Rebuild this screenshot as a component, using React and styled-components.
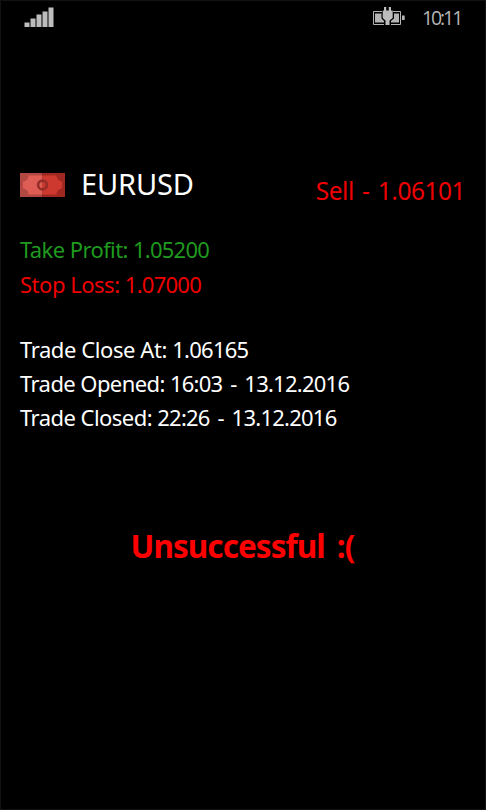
import React from "react";
import styled, { createGlobalStyle } from "styled-components";

const GlobalStyle = createGlobalStyle`
    * {
        box-sizing: border-box;
    }
    body {
        margin: 0;
        background: #000000;
    }
`;

const Screen = styled.div`
    width: 486px;
    height: 810px;
    display: flex;
    flex-direction: column;
    background: #000000;
    border: 1px solid #121212;
    font-family: "Noto Sans", "Open Sans", sans-serif;
    overflow: hidden;
`;

const StatusBar = styled.header`
    height: 33px;
    padding: 5px 23px 0 23px;
    display: flex;
    align-items: flex-start;
`;

const BatteryIcon = styled.svg`
    margin-left: auto;
`;

const Clock = styled.span`
    width: 40px;
    margin-left: 16px;
    color: #b4b4b4;
    font-family: "Open Sans", "Noto Sans", sans-serif;
    font-size: 19.5px;
    line-height: 24px;
    letter-spacing: -2.1px;
    white-space: nowrap;
`;

const Content = styled.main`
    display: flex;
    flex-direction: column;
    padding: 130px 20px 0 19px;
`;

const TradeHeader = styled.div`
    height: 40px;
    display: flex;
    align-items: flex-start;
`;

const MoneyIcon = styled.svg`
    margin-top: 9px;
`;

const Pair = styled.h1`
    margin: 0 0 0 16px;
    color: #ffffff;
    font-size: 29px;
    font-weight: 400;
    line-height: 40px;
    letter-spacing: -0.15px;
`;

const Price = styled.span`
    margin-left: auto;
    padding-top: 8px;
    color: #f00000;
    font-size: 24.5px;
    line-height: 38px;
    letter-spacing: -0.5px;
    word-spacing: 2.5px;
    white-space: nowrap;
`;

const Group = styled.section`
    margin-top: ${props => props.$top}px;
    display: flex;
    flex-direction: column;
`;

const Line = styled.p`
    margin: 0;
    height: 34.4px;
    color: ${props => props.color || "#ffffff"};
    font-size: 22px;
    line-height: 34.4px;
    white-space: pre;
`;

const Label = styled.span`
    letter-spacing: ${props => props.$spacing}px;
`;

const Value = styled.span`
    letter-spacing: -0.75px;
    word-spacing: 2.8px;
`;

const Result = styled.h2`
    margin: 89px 0 0 0;
    color: #ff0000;
    font-size: 31.5px;
    font-weight: 700;
    line-height: 44px;
    text-align: center;
    letter-spacing: -0.95px;
    word-spacing: 4.8px;
    white-space: nowrap;
`;

function Signal()
{
    return (
        <svg width="32" height="22" viewBox="0 0 32 22" fill="#bdbdbd">
            <rect x="0.5" y="16.5" width="5" height="4.500" />
            <rect x="6.5" y="12.5" width="5" height="8.500" />
            <rect x="12.5" y="8.5" width="5" height="12.500" />
            <rect x="18.5" y="5.5" width="5" height="15.500" />
            <rect x="24.5" y="1.5" width="5" height="19.500" />
        </svg>
    );
}

function Battery()
{
    return (
        <BatteryIcon width="34" height="22" viewBox="0 0 34 22">
            <path d="M10 5.500H1.500v13H12M21 5.500h7.500v13H19" fill="none" stroke="#b4b4b4" strokeWidth="1" />
            <path d="M3 7.500h6.500v5l2.500 2.500v1.500H3zM27 7.500h-5v5L19 15v1.500h8zM30 9.500h2.700v4.500H30z" fill="#b4b4b4" />
            <path d="M12 1h2.200v3.500h2.600V1H19v3.500h1.700v7.500L17.500 14.500v4.500h-4v-4.500L10.700 12V4.500H12z" fill="#bdbdbd" />
        </BatteryIcon>
    );
}

function Money()
{
    return (
        <MoneyIcon width="45" height="24" viewBox="0 0 45 24">
            <rect width="22.500" height="24" fill="#b34742" />
            <rect x="22.500" width="22.500" height="24" fill="#a12721" />
            <path d="M22.500 2.500H8.500c0 3-2 5.500-5.500 6v7c3.500.5 5.500 3 5.500 6h14z" fill="#de5d54" />
            <path d="M22.500 2.500h14c0 3 2 5.500 5.500 6v7c-3.500.5-5.500 3-5.500 6h-14z" fill="#cd392e" />
            <circle cx="22.500" cy="12" r="4.400" fill="none" stroke="#962d28" strokeWidth="2.600" />
        </MoneyIcon>
    );
}

function Field({ label, value, color, spacing })
{
    return (
        <Line color={color}>
            <Label $spacing={spacing}>{label}: </Label>
            <Value>{value}</Value>
        </Line>
    );
}

function App()
{
    return (
        <>
            <GlobalStyle />
            <Screen>
                <StatusBar>
                    <Signal />
                    <Battery />
                    <Clock>10:11</Clock>
                </StatusBar>
                <Content>
                    <TradeHeader>
                        <Money />
                        <Pair>EURUSD</Pair>
                        <Price>Sell - 1.06101</Price>
                    </TradeHeader>
                    <Group $top={28.3}>
                        <Field label="Take Profit" value="1.05200" color="#1f9a1f" spacing={-0.6} />
                        <Field label="Stop Loss" value="1.07000" color="#f00000" spacing={-0.48} />
                    </Group>
                    <Group $top={30.5}>
                        <Field label="Trade Close At" value="1.06165" spacing={-0.42} />
                        <Field label="Trade Opened" value="16:03 - 13.12.2016" spacing={-0.58} />
                        <Field label="Trade Closed" value="22:26 - 13.12.2016" spacing={-0.54} />
                    </Group>
                    <Result>Unsuccessful :(</Result>
                </Content>
            </Screen>
        </>
    );
}

export default App;
